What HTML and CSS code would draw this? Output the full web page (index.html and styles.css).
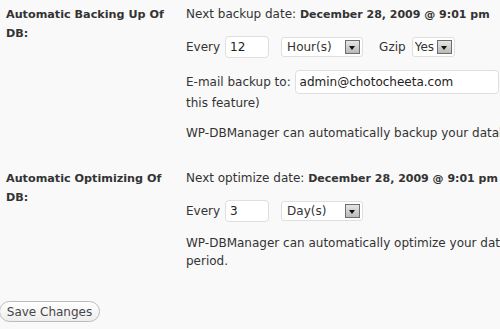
FILE: index.html
```html
<!DOCTYPE html>
<html lang="en">
<head>
    <meta charset="UTF-8">
    <meta name="viewport" content="width=device-width, initial-scale=1.0">
    <title>DB Options</title>
    <link rel="stylesheet" href="styles.css">
</head>
<body>
<form class="options">
    <div class="form-table">
        <div class="label">Automatic Backing Up Of DB:</div>
        <div class="field">
            <p>Next backup date: <b>December 28, 2009 @ 9:01 pm</b></p>
            <p class="controls">
                Every
                <input type="text" class="num" value="12">
                <span class="select wide">
                    <select><option>Hour(s)</option></select>
                    <span class="arrow"></span>
                </span>
                <span class="gzip">Gzip</span>
                <span class="select small">
                    <select><option>Yes</option></select>
                    <span class="arrow"></span>
                </span>
            </p>
            <p class="email">
                E-mail backup to: <input type="text" class="mail" value="admin@chotocheeta.com"> (Leave blank to disable<br>this feature)
            </p>
            <p>WP-DBManager can automatically backup your database after a certain period.</p>
        </div>

        <div class="label">Automatic Optimizing Of DB:</div>
        <div class="field">
            <p>Next optimize date: <b>December 28, 2009 @ 9:01 pm</b></p>
            <p class="controls">
                Every
                <input type="text" class="num" value="3">
                <span class="select wide">
                    <select><option>Day(s)</option></select>
                    <span class="arrow"></span>
                </span>
            </p>
            <p>WP-DBManager can automatically optimize your database after a certain<br>period.</p>
        </div>
    </div>
    <input type="submit" class="button" value="Save Changes">
</form>
</body>
</html>
```
FILE: styles.css
```css
body {
    margin: 0;
    background: #f9f9f9;
    color: #333;
    font-family: "DejaVu Sans", Verdana, sans-serif;
    font-size: 12px;
    overflow: hidden;
}

.options {
    width: 800px;
}

.form-table {
    display: grid;
    grid-template-columns: 186px 1fr;
    row-gap: 27px;
    padding-top: 5px;
}

.label {
    font-weight: bold;
    font-size: 11.2px;
    line-height: 19px;
    padding-left: 6px;
    width: 170px;
}

.field p {
    margin: 0 0 12px;
    line-height: 18px;
    white-space: nowrap;
}

.field p:last-child {
    margin-bottom: 0;
}

.field b {
    font-size: 11px;
}

.controls {
    display: flex;
    align-items: center;
    height: 22px;
}

input[type="text"] {
    font: inherit;
    color: #222;
    background: #fff;
    border: 1px solid #dfdfdf;
    border-radius: 4px;
    padding: 0 4px;
    box-sizing: border-box;
    outline: none;
}

.num {
    width: 44px;
    height: 22px;
    margin: 0 12px 0 5px;
}

.select {
    position: relative;
    display: inline-block;
}

.select select {
    appearance: none;
    font: inherit;
    color: #333;
    background: #fff;
    border: 1px solid #dfdfdf;
    border-radius: 3px;
    height: 20px;
    padding: 0 0 0 5px;
    box-sizing: border-box;
}

.wide select {
    width: 82px;
}

.small select {
    width: 43px;
    padding-left: 2px;
}

.arrow {
    position: absolute;
    right: 3px;
    top: 3px;
    width: 15px;
    height: 14px;
    box-sizing: border-box;
    border: 1px solid #6d6d6d;
    background: linear-gradient(#e6e6e6, #b9b9b9);
}

.arrow::after {
    content: "";
    position: absolute;
    left: 3px;
    top: 5px;
    border-left: 3.5px solid transparent;
    border-right: 3.5px solid transparent;
    border-top: 4px solid #111;
}

.gzip {
    margin: 0 6px 0 16px;
}

.email {
    line-height: 24px;
}

.mail {
    width: 204px;
    height: 24px;
    padding-left: 6px;
    vertical-align: middle;
}

.button {
    margin-top: 31px;
    font: inherit;
    color: #464646;
    background: linear-gradient(#fff, #eee);
    border: 1px solid #bbb;
    border-radius: 11px;
    height: 21px;
    width: 101px;
    padding: 0;
    margin-left: -1px;
}
```
